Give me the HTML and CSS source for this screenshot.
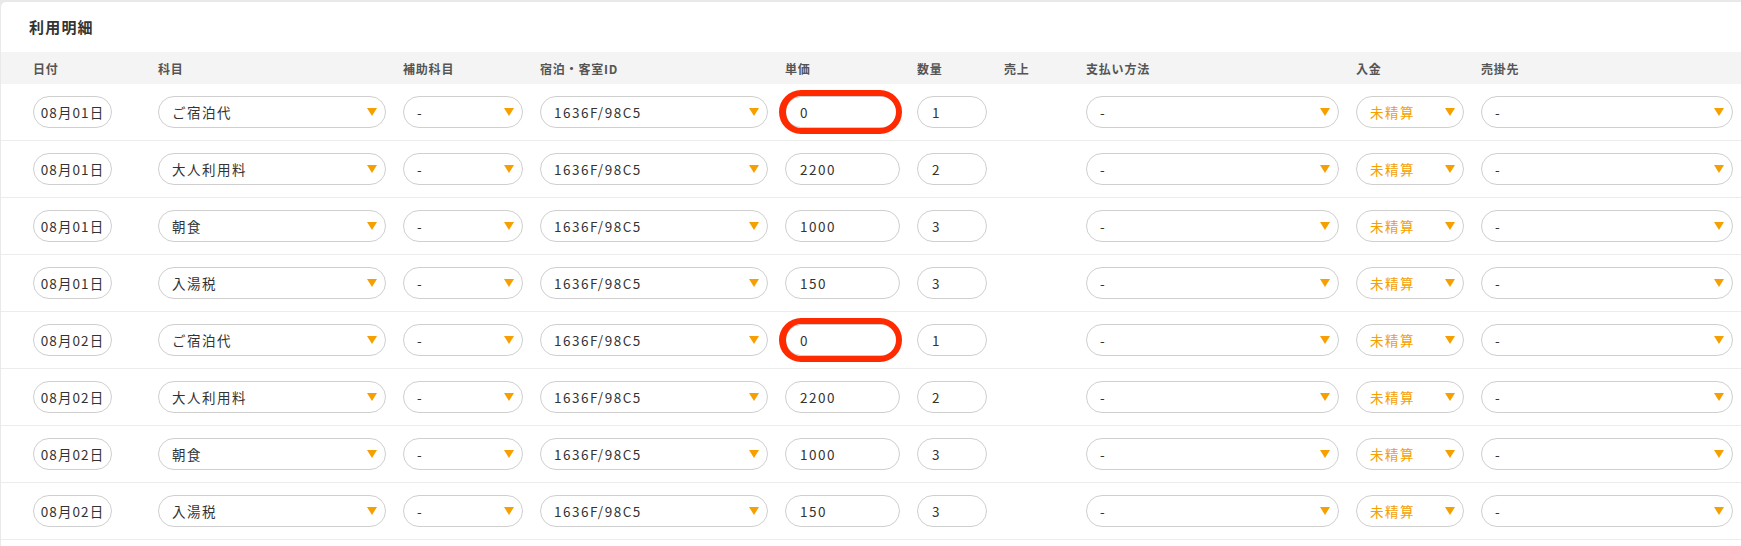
FILE: index.html
```html
<!DOCTYPE html>
<html lang="ja">
<head>
<meta charset="utf-8">
<title>利用明細</title>
<link rel="stylesheet" href="styles.css">
</head>
<body>
<div class="card">
  <div class="card-title">利用明細</div>
  <div class="table">
    <div class="row head">
      <div class="cell c-date">日付</div>
      <div class="cell">科目</div>
      <div class="cell">補助科目</div>
      <div class="cell">宿泊・客室ID</div>
      <div class="cell">単価</div>
      <div class="cell">数量</div>
      <div class="cell">売上</div>
      <div class="cell">支払い方法</div>
      <div class="cell">入金</div>
      <div class="cell last">売掛先</div>
    </div>

    <div class="row">
      <div class="cell c-date"><span class="pill date">08月01日</span></div>
      <div class="cell"><span class="pill select"><span class="val">ご宿泊代</span><i class="arrow"></i></span></div>
      <div class="cell"><span class="pill select"><span class="val">-</span><i class="arrow"></i></span></div>
      <div class="cell"><span class="pill select"><span class="val">1636F/98C5</span><i class="arrow"></i></span></div>
      <div class="cell flagged"><span class="pill input">0</span><span class="mark"></span></div>
      <div class="cell"><span class="pill input">1</span></div>
      <div class="cell"></div>
      <div class="cell"><span class="pill select"><span class="val">-</span><i class="arrow"></i></span></div>
      <div class="cell"><span class="pill select"><span class="val orange">未精算</span><i class="arrow"></i></span></div>
      <div class="cell last"><span class="pill select"><span class="val">-</span><i class="arrow"></i></span></div>
    </div>

    <div class="row">
      <div class="cell c-date"><span class="pill date">08月01日</span></div>
      <div class="cell"><span class="pill select"><span class="val">大人利用料</span><i class="arrow"></i></span></div>
      <div class="cell"><span class="pill select"><span class="val">-</span><i class="arrow"></i></span></div>
      <div class="cell"><span class="pill select"><span class="val">1636F/98C5</span><i class="arrow"></i></span></div>
      <div class="cell"><span class="pill input">2200</span></div>
      <div class="cell"><span class="pill input">2</span></div>
      <div class="cell"></div>
      <div class="cell"><span class="pill select"><span class="val">-</span><i class="arrow"></i></span></div>
      <div class="cell"><span class="pill select"><span class="val orange">未精算</span><i class="arrow"></i></span></div>
      <div class="cell last"><span class="pill select"><span class="val">-</span><i class="arrow"></i></span></div>
    </div>

    <div class="row">
      <div class="cell c-date"><span class="pill date">08月01日</span></div>
      <div class="cell"><span class="pill select"><span class="val">朝食</span><i class="arrow"></i></span></div>
      <div class="cell"><span class="pill select"><span class="val">-</span><i class="arrow"></i></span></div>
      <div class="cell"><span class="pill select"><span class="val">1636F/98C5</span><i class="arrow"></i></span></div>
      <div class="cell"><span class="pill input">1000</span></div>
      <div class="cell"><span class="pill input">3</span></div>
      <div class="cell"></div>
      <div class="cell"><span class="pill select"><span class="val">-</span><i class="arrow"></i></span></div>
      <div class="cell"><span class="pill select"><span class="val orange">未精算</span><i class="arrow"></i></span></div>
      <div class="cell last"><span class="pill select"><span class="val">-</span><i class="arrow"></i></span></div>
    </div>

    <div class="row">
      <div class="cell c-date"><span class="pill date">08月01日</span></div>
      <div class="cell"><span class="pill select"><span class="val">入湯税</span><i class="arrow"></i></span></div>
      <div class="cell"><span class="pill select"><span class="val">-</span><i class="arrow"></i></span></div>
      <div class="cell"><span class="pill select"><span class="val">1636F/98C5</span><i class="arrow"></i></span></div>
      <div class="cell"><span class="pill input">150</span></div>
      <div class="cell"><span class="pill input">3</span></div>
      <div class="cell"></div>
      <div class="cell"><span class="pill select"><span class="val">-</span><i class="arrow"></i></span></div>
      <div class="cell"><span class="pill select"><span class="val orange">未精算</span><i class="arrow"></i></span></div>
      <div class="cell last"><span class="pill select"><span class="val">-</span><i class="arrow"></i></span></div>
    </div>

    <div class="row">
      <div class="cell c-date"><span class="pill date">08月02日</span></div>
      <div class="cell"><span class="pill select"><span class="val">ご宿泊代</span><i class="arrow"></i></span></div>
      <div class="cell"><span class="pill select"><span class="val">-</span><i class="arrow"></i></span></div>
      <div class="cell"><span class="pill select"><span class="val">1636F/98C5</span><i class="arrow"></i></span></div>
      <div class="cell flagged"><span class="pill input">0</span><span class="mark"></span></div>
      <div class="cell"><span class="pill input">1</span></div>
      <div class="cell"></div>
      <div class="cell"><span class="pill select"><span class="val">-</span><i class="arrow"></i></span></div>
      <div class="cell"><span class="pill select"><span class="val orange">未精算</span><i class="arrow"></i></span></div>
      <div class="cell last"><span class="pill select"><span class="val">-</span><i class="arrow"></i></span></div>
    </div>

    <div class="row">
      <div class="cell c-date"><span class="pill date">08月02日</span></div>
      <div class="cell"><span class="pill select"><span class="val">大人利用料</span><i class="arrow"></i></span></div>
      <div class="cell"><span class="pill select"><span class="val">-</span><i class="arrow"></i></span></div>
      <div class="cell"><span class="pill select"><span class="val">1636F/98C5</span><i class="arrow"></i></span></div>
      <div class="cell"><span class="pill input">2200</span></div>
      <div class="cell"><span class="pill input">2</span></div>
      <div class="cell"></div>
      <div class="cell"><span class="pill select"><span class="val">-</span><i class="arrow"></i></span></div>
      <div class="cell"><span class="pill select"><span class="val orange">未精算</span><i class="arrow"></i></span></div>
      <div class="cell last"><span class="pill select"><span class="val">-</span><i class="arrow"></i></span></div>
    </div>

    <div class="row">
      <div class="cell c-date"><span class="pill date">08月02日</span></div>
      <div class="cell"><span class="pill select"><span class="val">朝食</span><i class="arrow"></i></span></div>
      <div class="cell"><span class="pill select"><span class="val">-</span><i class="arrow"></i></span></div>
      <div class="cell"><span class="pill select"><span class="val">1636F/98C5</span><i class="arrow"></i></span></div>
      <div class="cell"><span class="pill input">1000</span></div>
      <div class="cell"><span class="pill input">3</span></div>
      <div class="cell"></div>
      <div class="cell"><span class="pill select"><span class="val">-</span><i class="arrow"></i></span></div>
      <div class="cell"><span class="pill select"><span class="val orange">未精算</span><i class="arrow"></i></span></div>
      <div class="cell last"><span class="pill select"><span class="val">-</span><i class="arrow"></i></span></div>
    </div>

    <div class="row">
      <div class="cell c-date"><span class="pill date">08月02日</span></div>
      <div class="cell"><span class="pill select"><span class="val">入湯税</span><i class="arrow"></i></span></div>
      <div class="cell"><span class="pill select"><span class="val">-</span><i class="arrow"></i></span></div>
      <div class="cell"><span class="pill select"><span class="val">1636F/98C5</span><i class="arrow"></i></span></div>
      <div class="cell"><span class="pill input">150</span></div>
      <div class="cell"><span class="pill input">3</span></div>
      <div class="cell"></div>
      <div class="cell"><span class="pill select"><span class="val">-</span><i class="arrow"></i></span></div>
      <div class="cell"><span class="pill select"><span class="val orange">未精算</span><i class="arrow"></i></span></div>
      <div class="cell last"><span class="pill select"><span class="val">-</span><i class="arrow"></i></span></div>
    </div>
  </div>
</div>
</body>
</html>
```

FILE: styles.css
```css
* { box-sizing: border-box; }

html, body {
  margin: 0;
  padding: 0;
  background: #e9e9e9;
  overflow: hidden;
}

body {
  font-family: "Noto Sans CJK JP", "Noto Sans", sans-serif;
  color: #333;
  padding: 2px 0 0 1px;
}

.card {
  background: #fff;
  border-top-left-radius: 5px;
  min-height: 544px;
}

.card-title {
  height: 50px;
  line-height: 50px;
  padding-left: 28px;
  font-size: 15px;
  font-weight: bold;
  letter-spacing: 1.2px;
  color: #333;
}

.row {
  display: grid;
  grid-template-columns: 125px 245px 137px 245px 132px 87px 82px 270px 125px 1fr;
  align-items: center;
  padding: 12px 8px 12px 32px;
  border-bottom: 1px solid #ececec;
}

.row.head {
  height: 32px;
  padding-top: 0;
  padding-bottom: 0;
  background: #f4f4f4;
  border-bottom: none;
  font-size: 12px;
  font-weight: bold;
  color: #555;
  letter-spacing: 0.8px;
}

.cell {
  padding-right: 17px;
  position: relative;
}

.cell.c-date { padding-right: 46px; }
.cell.last { padding-right: 0; }

.pill {
  display: flex;
  align-items: center;
  width: 100%;
  height: 32px;
  border: 1px solid #cfcfcf;
  border-radius: 16px;
  background: #fff;
  font-size: 13.5px;
  letter-spacing: 1.5px;
  color: #333;
  white-space: nowrap;
}

.pill.date {
  justify-content: center;
  padding: 0 4px;
  letter-spacing: 1.1px;
}

.pill.input {
  padding: 0 14px;
}

.pill.select {
  justify-content: space-between;
  padding: 0 8px 0 13px;
}

.val.orange { color: #f5a000; }

.arrow {
  display: block;
  width: 0;
  height: 0;
  border-left: 5px solid transparent;
  border-right: 5px solid transparent;
  border-top: 8px solid #f5a000;
}

.mark {
  position: absolute;
  left: -6px;
  right: 15px;
  top: -6px;
  bottom: -6px;
  border: 6px solid #ff2a00;
  border-left-width: 7px;
  border-radius: 22px;
  pointer-events: none;
}
```
